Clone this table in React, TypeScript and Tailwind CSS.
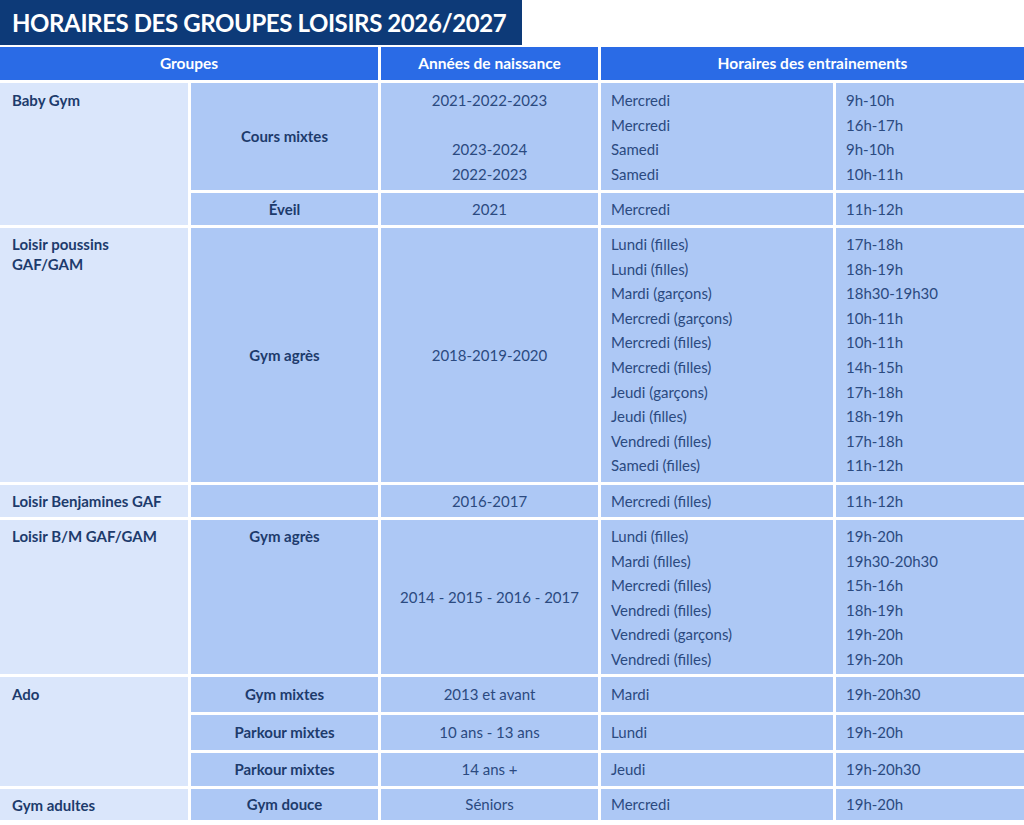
const font = "font-['Lato','Liberation_Sans',sans-serif]"

const base = "bg-[#adc8f5] text-[#2b4a80] text-[15px] leading-[24.6px]"
const col1 = "bg-[#dae6fb] text-[#1d3b6c] text-[15px] leading-[20px] px-3 font-bold"
const sub = "bg-[#adc8f5] text-[#1d3b6c] text-[15px] leading-[24.6px] font-bold text-center"
const head = "bg-[#2a6be6] text-white text-[15.5px] font-bold flex items-center justify-center"

// single-line cells, vertically centered
const mid = `${base} flex items-center justify-center`
const midL = `${base} flex items-center px-[10px]`
const subMid = `${sub} flex items-center justify-center`

function Lines({ items }: { items: string[] }) {
  return (
    <>
      {items.map((t, i) => (
        <div key={i}>{t || "\u00a0"}</div>
      ))}
    </>
  )
}

export default function App() {
  return (
    <div className={`${font} w-[1024px] h-[825px] bg-white`}>
      {/* Title */}
      <div className="w-[522px] h-[45px] bg-[#0d3a78] flex items-center pl-3">
        <h1 className="text-white text-[24px] font-bold tracking-[-0.4px] whitespace-nowrap">
          HORAIRES DES GROUPES LOISIRS 2026/2027
        </h1>
      </div>

      {/* Table */}
      <div className="mt-[2px] grid grid-cols-[188px_187px_217px_232px_188px] grid-rows-[33px_107px_32px_254px_32px_154px_35px_35px_33px_31px] gap-[3px]">
        {/* Header */}
        <div className={`${head} col-span-2`}>Groupes</div>
        <div className={head}>Années de naissance</div>
        <div className={`${head} col-span-2`}>Horaires des entrainements</div>

        {/* Baby Gym */}
        <div className={`${col1} row-span-2 pt-[7px]`}>Baby Gym</div>
        <div className={subMid}>Cours mixtes</div>
        <div className={`${base} pt-[5px] text-center`}>
          <Lines items={["2021-2022-2023", "", "2023-2024", "2022-2023"]} />
        </div>
        <div className={`${base} pt-[5px] px-[10px]`}>
          <Lines items={["Mercredi", "Mercredi", "Samedi", "Samedi"]} />
        </div>
        <div className={`${base} pt-[5px] px-[10px]`}>
          <Lines items={["9h-10h", "16h-17h", "9h-10h", "10h-11h"]} />
        </div>

        <div className={subMid}>Éveil</div>
        <div className={mid}>2021</div>
        <div className={midL}>Mercredi</div>
        <div className={midL}>11h-12h</div>

        {/* Loisir poussins */}
        <div className={`${col1} pt-[6px]`}>
          Loisir poussins
          <br />
          GAF/GAM
        </div>
        <div className={subMid}>Gym agrès</div>
        <div className={mid}>2018-2019-2020</div>
        <div className={`${base} pt-[4px] px-[10px]`}>
          <Lines
            items={[
              "Lundi (filles)",
              "Lundi (filles)",
              "Mardi (garçons)",
              "Mercredi (garçons)",
              "Mercredi (filles)",
              "Mercredi (filles)",
              "Jeudi (garçons)",
              "Jeudi (filles)",
              "Vendredi (filles)",
              "Samedi (filles)",
            ]}
          />
        </div>
        <div className={`${base} pt-[4px] px-[10px]`}>
          <Lines
            items={["17h-18h", "18h-19h", "18h30-19h30", "10h-11h", "10h-11h", "14h-15h", "17h-18h", "18h-19h", "17h-18h", "11h-12h"]}
          />
        </div>

        {/* Loisir Benjamines */}
        <div className={`${col1} flex items-center`}>Loisir Benjamines GAF</div>
        <div className={sub}></div>
        <div className={mid}>2016-2017</div>
        <div className={midL}>Mercredi (filles)</div>
        <div className={midL}>11h-12h</div>

        {/* Loisir B/M */}
        <div className={`${col1} pt-[6px]`}>Loisir B/M GAF/GAM</div>
        <div className={`${sub} pt-[4px]`}>Gym agrès</div>
        <div className={mid}>2014 - 2015 - 2016 - 2017</div>
        <div className={`${base} pt-[4px] px-[10px]`}>
          <Lines
            items={[
              "Lundi (filles)",
              "Mardi (filles)",
              "Mercredi (filles)",
              "Vendredi (filles)",
              "Vendredi (garçons)",
              "Vendredi (filles)",
            ]}
          />
        </div>
        <div className={`${base} pt-[4px] px-[10px]`}>
          <Lines items={["19h-20h", "19h30-20h30", "15h-16h", "18h-19h", "19h-20h", "19h-20h"]} />
        </div>

        {/* Ado */}
        <div className={`${col1} row-span-3 pt-[7px]`}>Ado</div>
        <div className={subMid}>Gym mixtes</div>
        <div className={mid}>2013 et avant</div>
        <div className={midL}>Mardi</div>
        <div className={midL}>19h-20h30</div>

        <div className={subMid}>Parkour mixtes</div>
        <div className={mid}>10 ans - 13 ans</div>
        <div className={midL}>Lundi</div>
        <div className={midL}>19h-20h</div>

        <div className={subMid}>Parkour mixtes</div>
        <div className={mid}>14 ans +</div>
        <div className={midL}>Jeudi</div>
        <div className={midL}>19h-20h30</div>

        {/* Gym adultes */}
        <div className={`${col1} flex items-center`}>Gym adultes</div>
        <div className={subMid}>Gym douce</div>
        <div className={mid}>Séniors</div>
        <div className={midL}>Mercredi</div>
        <div className={midL}>19h-20h</div>
      </div>
    </div>
  )
}
